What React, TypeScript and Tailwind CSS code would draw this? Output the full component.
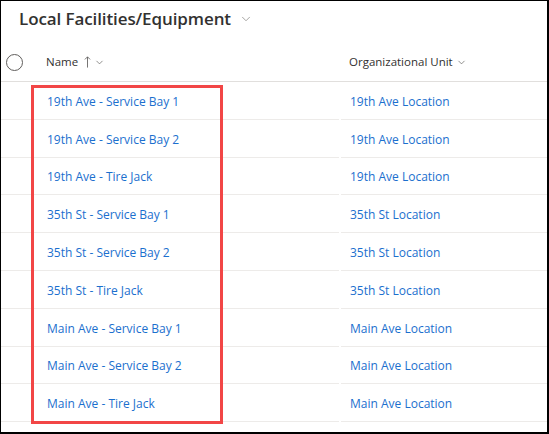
import { ChevronDown } from "lucide-react";

const rows = [
  ["19th Ave - Service Bay 1", "19th Ave Location"],
  ["19th Ave - Service Bay 2", "19th Ave Location"],
  ["19th Ave - Tire Jack", "19th Ave Location"],
  ["35th St - Service Bay 1", "35th St Location"],
  ["35th St - Service Bay 2", "35th St Location"],
  ["35th St - Tire Jack", "35th St Location"],
  ["Main Ave - Service Bay 1", "Main Ave Location"],
  ["Main Ave - Service Bay 2", "Main Ave Location"],
  ["Main Ave - Tire Jack", "Main Ave Location"],
];

export default function App() {
  return (
    <div
      className="relative h-[434px] w-[549px] overflow-hidden border-t border-l border-r-2 border-b-2 border-black bg-white text-[#323130]"
      style={{ fontFamily: '"Open Sans", "Noto Sans", sans-serif' }}
    >
      <div className="flex h-[34px] items-center pl-[18px]">
        <h1 className="text-[17px] font-semibold leading-none tracking-[-0.1px]">
          Local Facilities/Equipment
        </h1>
        <ChevronDown className="ml-[8px] mt-[2px] size-[14px] text-[#8a8886]" strokeWidth={1.3} />
      </div>

      <div className="flex h-[47px] items-center border-b border-[#e1dfdd] pt-[8px] text-[11.5px]">
        <div className="flex w-[45px] pl-[5px]">
          <div className="size-[17px] rounded-full border border-[#605e5c]" />
        </div>
        <div className="flex w-[303px] items-center">
          <span>Name</span>
          <svg viewBox="0 0 8 14" className="ml-[6px] h-[12px] w-[7px] text-[#605e5c]" fill="none" stroke="currentColor" strokeWidth="1">
            <path d="M4 13.5V1M1 4l3-3 3 3" />
          </svg>
          <ChevronDown className="ml-[3px] size-[11px] text-[#605e5c]" strokeWidth={1.5} />
        </div>
        <div className="flex items-center">
          <span>Organizational Unit</span>
          <ChevronDown className="ml-[3px] size-[11px] text-[#605e5c]" strokeWidth={1.5} />
        </div>
      </div>

      {rows.map(([name, unit]) => (
        <div key={name} className="flex h-[37.8px] text-[12px] text-[#1b6fce]">
          <div className="w-[33px] border-b border-[#edebe9]" />
          <div className="flex w-[305px] items-center border-b border-[#edebe9] pl-[13px] pt-[3px]">
            {name}
          </div>
          <div className="ml-[2px] flex flex-1 items-center border-b border-[#edebe9] pl-[9px] pt-[3px]">
            {unit}
          </div>
        </div>
      ))}

      <div className="pointer-events-none absolute left-[30px] top-[84px] h-[339px] w-[192px] border-[3px] border-[#f24646]" />
    </div>
  );
}
